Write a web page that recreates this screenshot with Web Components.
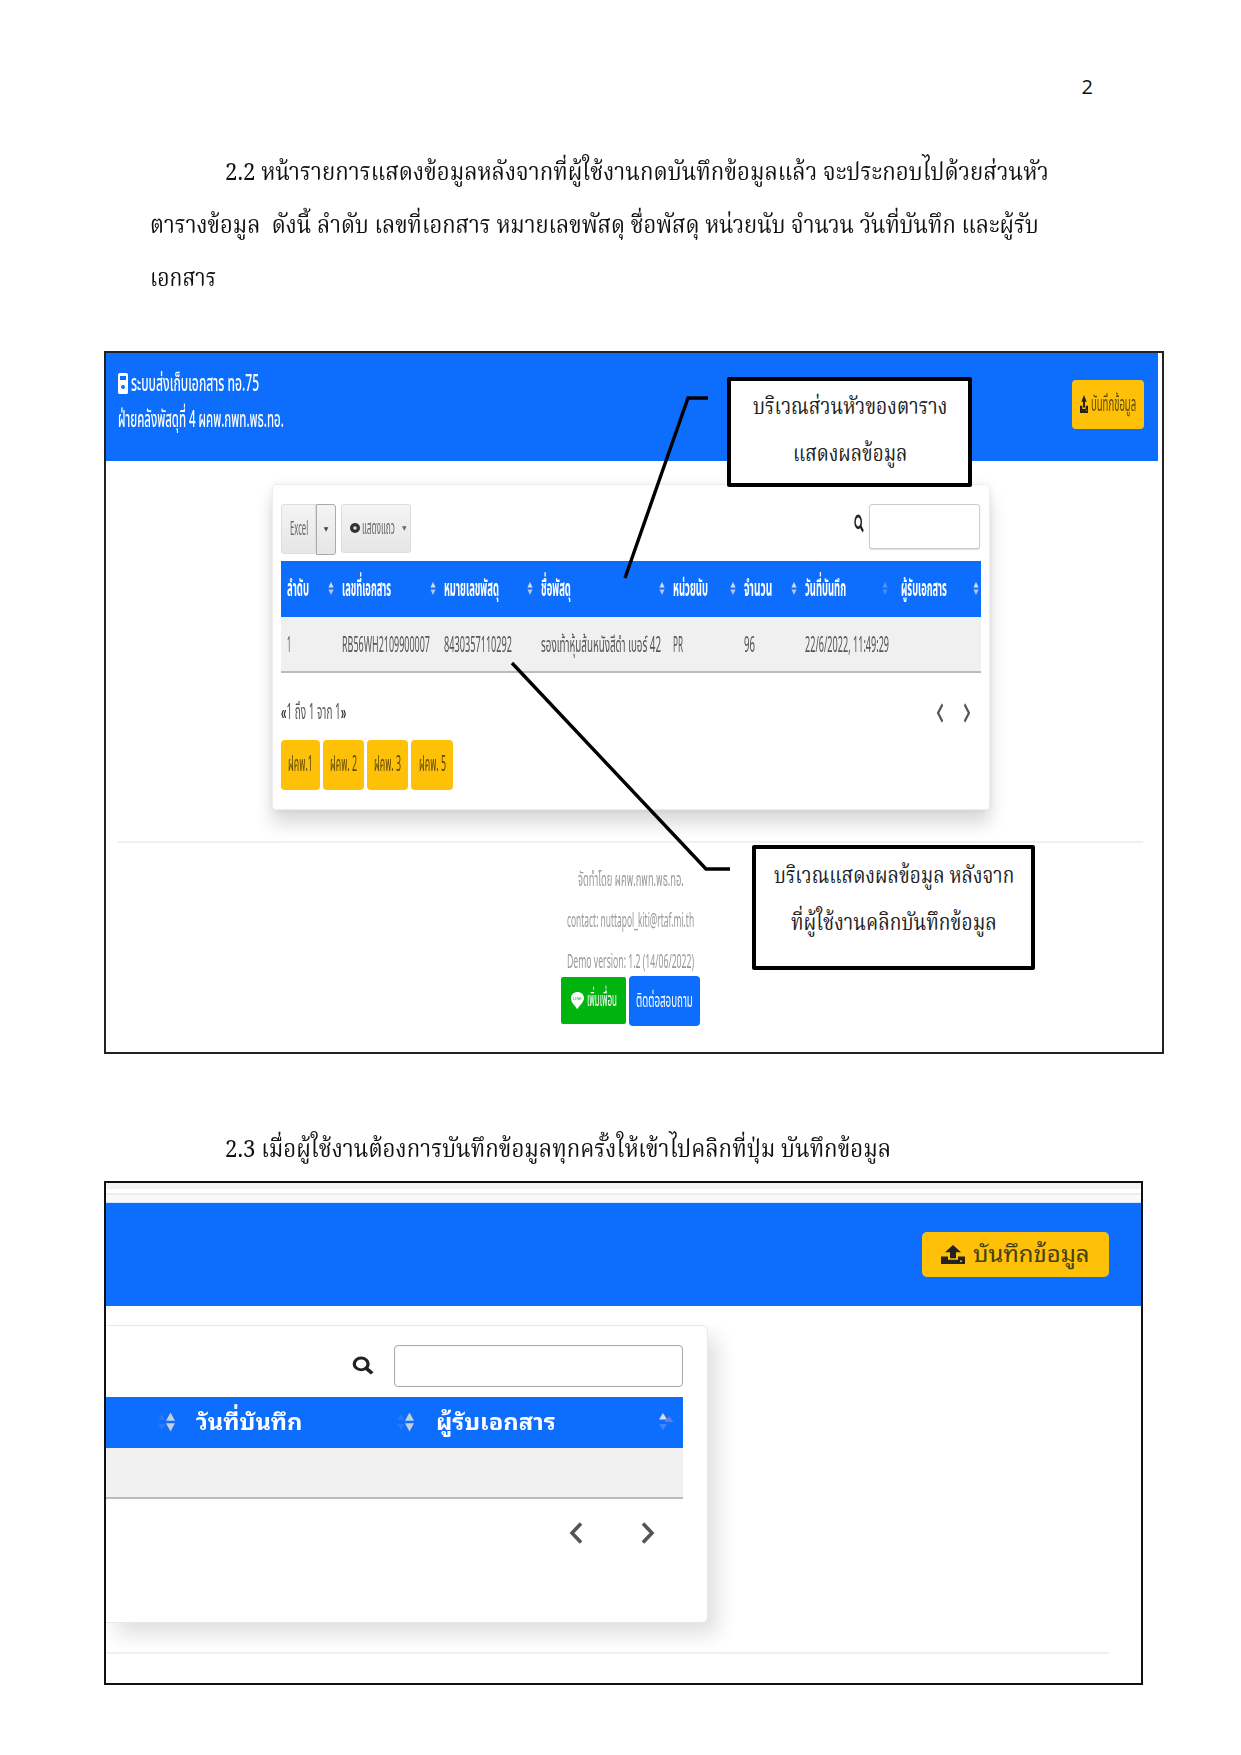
<!DOCTYPE html>
<html lang="th"><head><meta charset="utf-8"><title>คู่มือ</title>
<style>html,body{margin:0;background:#fff}</style></head>
<body>
<doc-page>
  <page-num>2</page-num>
  <doc-para style="margin-top:50px">
    <div style="padding-left:225px"><fit-text w="824">2.2 หน้ารายการแสดงข้อมูลหลังจากที่ผู้ใช้งานกดบันทึกข้อมูลแล้ว จะประกอบไปด้วยส่วนหัว</fit-text></div>
    <div style="padding-left:150px"><fit-text w="889">ตารางข้อมูล &nbsp;ดังนี้ ลำดับ เลขที่เอกสาร หมายเลขพัสดุ ชื่อพัสดุ หน่วยนับ จำนวน วันที่บันทึก และผู้รับ</fit-text></div>
    <div style="padding-left:150px"><fit-text w="66">เอกสาร</fit-text></div>
  </doc-para>
  <shot-list style="margin-top:43px"></shot-list>
  <doc-para style="margin-top:71px">
    <div style="padding-left:225px"><fit-text w="666">2.3 เมื่อผู้ใช้งานต้องการบันทึกข้อมูลทุกครั้งให้เข้าไปคลิกที่ปุ่ม บันทึกข้อมูล</fit-text></div>
  </doc-para>
  <shot-save style="margin-top:3px"></shot-save>

  <leader-lines></leader-lines>
  <note-box style="left:727px;top:377px;width:245px;height:110px;padding-bottom:1px">
    <div><fit-text w="194">บริเวณส่วนหัวของตาราง</fit-text></div>
    <div><fit-text w="114">แสดงผลข้อมูล</fit-text></div>
  </note-box>
  <note-box style="left:752px;top:845px;width:283px;height:125px;padding-bottom:14px">
    <div><fit-text w="240">บริเวณแสดงผลข้อมูล หลังจาก</fit-text></div>
    <div><fit-text w="206">ที่ผู้ใช้งานคลิกบันทึกข้อมูล</fit-text></div>
  </note-box>
</doc-page>
<script>
const mk=(name,css,html)=>customElements.define(name,class extends HTMLElement{
  constructor(){super();this.attachShadow({mode:'open'}).innerHTML=`<style>${css}</style>${html}`}
});
const THAI='"Noto Sans Thai","Loma","Norasi","Garuda","Noto Sans","DejaVu Sans","Liberation Sans",sans-serif';
const LOOP='"Noto Sans Thai Looped","Noto Serif Thai","Norasi","Noto Sans","Liberation Sans",sans-serif';
const SERIF='"Noto Serif Thai","Norasi","Liberation Serif","Noto Sans","DejaVu Serif",serif';

mk('doc-page',`:host{display:block;position:relative;width:1241px;height:1755px;overflow:hidden;background:#fff;color:#000}`,`<slot></slot>`);
mk('page-num',`:host{display:block;padding-top:76px;padding-right:148px;text-align:right;font:20px/22px "Open Sans","Liberation Sans",sans-serif;color:#111}`,`<slot></slot>`);
mk('doc-para',`:host{display:block;font:24px/52.5px ${SERIF};color:#111}`,`<slot></slot>`);
mk('note-box',`:host{position:absolute;box-sizing:border-box;display:flex;flex-direction:column;align-items:center;justify-content:center;background:#fff;border:4px solid #000;border-radius:2px;font:23px/46px ${SERIF};color:#222;text-align:center}`,`<slot></slot>`);
mk('leader-lines',`:host{position:absolute;left:0;top:0;width:1241px;height:1755px;pointer-events:none}svg{display:block}`,
`<svg width="1241" height="1755" fill="none" stroke="#000" stroke-width="3.4"><path d="M708 398H688L625 578"/><path d="M512 663L706 869H730"/></svg>`);

mk('sort-mark',`:host{display:inline-flex;flex:none}svg{display:block}`,
`<svg width="6" height="15" viewBox="0 0 6 15"><path d="M3 1 5.6 6.4H.4z" fill="#d5dcea"/><path d="M3 14 5.6 8.6H.4z" fill="#b9c4da"/></svg>`);
mk('sort-big',`:host{display:inline-flex;flex:none}svg{display:block}`,
`<svg width="18" height="24" viewBox="0 0 18 24"><path d="M4 4 7.500 10H.5zM4 20 7.500 14H.5z" fill="#2a78fb"/><path d="M12.500 2.500 17 10.800H8zM12.500 21.500 17 13.200H8z" fill="#c4cedd"/></svg>`);
mk('sort-top',`:host{display:inline-flex;flex:none}svg{display:block}`,
`<svg width="17" height="24" viewBox="0 0 17 24"><path d="M6 3 10 9.500H2z" fill="#cfdcf3"/><path d="M12 6 16.500 12H7.500z" fill="#6d79d6"/><path d="M6 20 10 14H2z" fill="#3d86fb"/></svg>`);
mk('tray-icon',`:host{display:inline-flex;flex:none}svg{display:block;width:100%;height:100%}`,
`<svg viewBox="0 0 24 20" preserveAspectRatio="none"><path d="M12 0 20 7.500H15V14H9V7.500H4z" fill="#222"/><path d="M0 12H7V15.500H17V12H24V20H0z" fill="#222"/><circle cx="20" cy="17" r="1" fill="#ffc107"/></svg>`);
mk('chev-mark',`:host{display:inline-flex;flex:none}svg{display:block;width:100%;height:100%}`,
`<svg viewBox="0 0 16 22" preserveAspectRatio="none" fill="none" stroke="#555" stroke-width="3.600" stroke-linejoin="miter"><path d="M13 1.500 4 11 13 20.500"/></svg>`);
mk('chev-next',`:host{display:inline-flex;flex:none}svg{display:block;width:100%;height:100%}`,
`<svg viewBox="0 0 16 22" preserveAspectRatio="none" fill="none" stroke="#555" stroke-width="3.600"><path d="M3 1.500 12 11 3 20.500"/></svg>`);
mk('search-mark',`:host{display:inline-flex;flex:none}svg{display:block;width:100%;height:100%}`,
`<svg viewBox="0 0 24 24" preserveAspectRatio="none" fill="none" stroke="#222"><circle cx="10" cy="10" r="7.500" stroke-width="3.600"/><path d="M15.500 15.500 22 22" stroke-width="4.200"/></svg>`);
mk('pill-btn',`:host{display:inline-flex;align-items:center;justify-content:center;box-sizing:border-box;background:#ffc107;border-radius:4px;color:#5c4a08;flex:none}`,`<slot></slot>`);

mk('shot-list',`
:host{display:block;box-sizing:border-box;margin-left:104px;width:1060px;height:703px;border:2px solid #222;background:#fff;overflow:hidden;font-family:${THAI}}
.in{filter:blur(.55px);height:100%;padding-right:4px;box-sizing:border-box}
header{height:108px;background:#0d6efd;color:#fff;padding-left:12px;position:relative;display:flex;box-sizing:border-box;justify-content:space-between;padding-right:14px}
header .l{display:flex;align-items:center;height:36px;gap:3px;font-size:23px;font-weight:500}
.lock{width:10px;height:21px;display:block;flex:none}
pill-btn.save{width:72px;height:49px;gap:3px;font-size:21px}
.ht{padding-top:13px}
.sv{padding-top:27px}
.card{box-sizing:border-box;margin:23px 0 0 166px;width:718px;height:326px;padding:19px 9px 0 8px;background:#fff;border:1px solid #eee;border-radius:4px;box-shadow:0 14px 18px rgba(0,0,0,.15),0 0 8px rgba(0,0,0,.07)}
.tools{display:flex;align-items:flex-start;height:50px}
.b{box-sizing:border-box;display:flex;align-items:center;background:linear-gradient(#f4f4f4,#e6e6e6);border:1px solid #ddd;color:#666;font-size:20px;height:50px}
.ex{width:35px;justify-content:center;border-radius:3px 0 0 3px}
.car{width:20px;justify-content:center;height:51px;font-size:6px;color:#444;border-color:#aaa;border-radius:0 3px 3px 0}
.sh{width:70px;margin-left:5px;gap:2px;padding-left:8px;border-radius:3px;height:49px}
.eye{width:10px;height:10px;flex:none;display:block}
.find{margin-left:auto;display:flex;align-items:center;gap:5px}
search-mark{width:10px;height:19px;margin-top:-5px}
.inp{width:111px;height:45px;box-sizing:border-box;border:1px solid #ccc;border-radius:3px;background:#fff;box-shadow:0 1px 1px #ddd}
.grid{display:grid;grid-template-columns:55px 102px 97px 132px 71px 61px 96px 86px;margin-top:7px;width:700px;font-size:23px}
.th{height:56px;background:#0d6efd;color:#fff;font-weight:700;display:flex;align-items:center;justify-content:space-between;padding:0 2px 0 6px;box-sizing:border-box}
.td{height:56px;background:#f0f0f0;border-bottom:2px solid #bbb;box-sizing:border-box;display:flex;align-items:center;padding:4px 0 0 6px;color:#555;font-size:21px}
.pg{display:flex;align-items:center;justify-content:space-between;height:34px;margin-top:23px;color:#555;font-size:21px}
.pg b{color:#333;font-weight:700;font-family:"Liberation Sans",sans-serif}
.ch{display:flex;gap:19px;padding-right:9px}
.ch>*{width:8px;height:20px}
.btns{display:flex;gap:3px;margin-top:10px}
.btns pill-btn{height:50px;font-size:21px}
.foot{border-top:2px solid #eef0f3;margin:31px 15px 0 12px;padding:17px 0 0 443px;color:#999;font-size:20px}
.col{width:139px;text-align:center}
.col>div{height:41px;line-height:41px}
.col>.bar{display:flex;gap:3px;margin-top:-7px;height:auto;line-height:1}
.g,.bl{display:flex;align-items:center;justify-content:center;color:#fff;border-radius:2px;font-size:20px}
.g{background:#00b30f;width:65px;height:47px;gap:3px;margin-top:1px}
.bl{background:#0d6efd;width:71px;height:50px;border-radius:4px}
.lineic{width:13px;height:19px;display:block;flex:none}
`,`
<div class="in">
<header>
  <div class="ht">
    <div class="l"><svg class="lock" viewBox="0 0 10 21" preserveAspectRatio="none"><path d="M1 0H9L10 1.500V20L9 21H1L0 20V1.500z" fill="#fff"/><rect x="2" y="3" width="6" height="4" fill="#0d6efd"/><circle cx="5" cy="14" r="2" fill="#0d6efd"/></svg><fit-text w="128">ระบบส่งเก็บเอกสาร ทอ.75</fit-text></div>
    <div class="l"><fit-text w="166">ฝ่ายคลังพัสดุที่ 4 ผคพ.กพท.พธ.ทอ.</fit-text></div>
  </div>
  <div class="sv"><pill-btn class="save"><tray-icon style="width:8px;height:18px"></tray-icon><fit-text w="45">บันทึกข้อมูล</fit-text></pill-btn></div>
</header>
<div class="card">
  <div class="tools">
    <div class="b ex"><fit-text w="18">Excel</fit-text></div><div class="b car">▼</div>
    <div class="b sh"><svg class="eye" viewBox="0 0 10 10"><circle cx="5" cy="5" r="5" fill="#333"/><circle cx="5" cy="5" r="1.800" fill="#ddd"/></svg><fit-text w="33">แสดงแถว</fit-text><span style="font-size:6px;margin-left:5px">▼</span></div>
    <div class="find"><search-mark></search-mark><div class="inp"></div></div>
  </div>
  <div class="grid">
    <div class="th"><fit-text w="22">ลำดับ</fit-text><sort-mark></sort-mark></div>
    <div class="th"><fit-text w="49">เลขที่เอกสาร</fit-text><sort-mark></sort-mark></div>
    <div class="th"><fit-text w="55">หมายเลขพัสดุ</fit-text><sort-mark></sort-mark></div>
    <div class="th"><fit-text w="30">ชื่อพัสดุ</fit-text><sort-mark></sort-mark></div>
    <div class="th"><fit-text w="35">หน่วยนับ</fit-text><sort-mark></sort-mark></div>
    <div class="th"><fit-text w="28">จำนวน</fit-text><sort-mark></sort-mark></div>
    <div class="th"><fit-text w="41">วันที่บันทึก</fit-text><sort-mark style="opacity:.35;margin-right:5px"></sort-mark></div>
    <div class="th"><fit-text w="46">ผู้รับเอกสาร</fit-text><sort-mark></sort-mark></div>
    <div class="td"><fit-text w="4">1</fit-text></div>
    <div class="td"><fit-text w="88">RB56WH2109900007</fit-text></div>
    <div class="td"><fit-text w="68">8430357110292</fit-text></div>
    <div class="td"><fit-text w="120">รองเท้าหุ้มส้นหนังสีดำ เบอร์ 42</fit-text></div>
    <div class="td"><fit-text w="10">PR</fit-text></div>
    <div class="td"><fit-text w="11">96</fit-text></div>
    <div class="td"><fit-text w="84">22/6/2022, 11:49:29</fit-text></div>
    <div class="td"></div>
  </div>
  <div class="pg"><fit-text w="65"><b>«</b>1 ถึง 1 จาก 1<b>»</b></fit-text><div class="ch"><chev-mark></chev-mark><chev-next></chev-next></div></div>
  <div class="btns">
    <pill-btn style="width:39px"><fit-text w="25">ฝคพ.1</fit-text></pill-btn>
    <pill-btn style="width:41px"><fit-text w="27">ฝคพ. 2</fit-text></pill-btn>
    <pill-btn style="width:41px"><fit-text w="27">ฝคพ. 3</fit-text></pill-btn>
    <pill-btn style="width:42px"><fit-text w="27">ฝคพ. 5</fit-text></pill-btn>
  </div>
</div>
<div class="foot"><div class="col">
  <div><fit-text w="106">จัดทำโดย ผคพ.กพท.พธ.ทอ.</fit-text></div>
  <div><fit-text w="127">contact: nuttapol_kiti@rtaf.mi.th</fit-text></div>
  <div><fit-text w="127">Demo version: 1.2 (14/06/2022)</fit-text></div>
  <div class="bar">
    <div class="g"><svg class="lineic" viewBox="0 0 13 19" preserveAspectRatio="none"><path d="M6.500 1C10 1 13 3.500 13 7C13 11 8 15 6 18.500C6 16 0 13 0 7C0 3.500 3 1 6.500 1Z" fill="#fff"/><text x="6.500" y="9" font-size="4" text-anchor="middle" fill="#00b30f" font-family="Liberation Sans">LINE</text></svg><fit-text w="30">เพิ่มเพื่อน</fit-text></div>
    <div class="bl"><fit-text w="57">ติดต่อสอบถาม</fit-text></div>
  </div>
</div></div>
</div>`);

mk('shot-save',`
:host{display:block;box-sizing:border-box;margin-left:104px;width:1039px;height:504px;border:2px solid #111;background:#fff;overflow:hidden;font-family:${LOOP}}
.in{filter:blur(.3px)}
.strip{height:20px;box-sizing:border-box;background:linear-gradient(#f3f3f3 0,#f3f3f3 6px,#fff 6px,#fff 10px,#eee 10px,#eee 12px,#f9f9f9 12px,#f9f9f9 19px,#d6e8ff 19px)}
header{height:103px;background:#0d6efd;display:flex;justify-content:flex-end;align-items:flex-start;padding:29px 32px 0 0;box-sizing:border-box}
pill-btn{width:187px;height:45px;gap:8px;font-size:22px;color:#444018;border-radius:5px}
pill-btn fit-text{margin-bottom:4px}
.card{box-sizing:border-box;margin-top:19px;width:602px;height:298px;background:#fff;border:1px solid #e6e8ec;border-left:0;border-radius:0 6px 6px 0;padding:19px 24px 0 0;box-shadow:10px 12px 20px rgba(0,0,0,.12)}
.find{display:flex;justify-content:flex-end;align-items:center;gap:20px}
search-mark{width:22px;height:19px}
.inp{width:289px;height:42px;box-sizing:border-box;border:1px solid #aaa;border-radius:4px;box-shadow:inset 0 0 1px #ccc}
.head{margin-top:10px;height:51px;background:#0d6efd;display:grid;grid-template-columns:70px 240px 267px;color:#fff;font-weight:700;font-size:23px}
.head>div{display:flex;align-items:center;justify-content:space-between;padding-left:20px;box-sizing:border-box}
.head fit-text{margin-bottom:6px}
.row{height:51px;background:#f1f1f1;border-bottom:2px solid #bbb;box-sizing:border-box}
.ch{display:flex;justify-content:flex-end;gap:56px;padding:23px 27px 0 0}
.ch>*{width:16px;height:22px}
.rule{margin-top:29px;width:1003px;height:2px;background:#eef0f3}
`,`
<div class="in">
<div class="strip"></div>
<header><pill-btn><tray-icon style="width:24px;height:19px"></tray-icon><fit-text w="117">บันทึกข้อมูล</fit-text></pill-btn></header>
<div class="card">
  <div class="find"><search-mark></search-mark><div class="inp"></div></div>
  <div class="head">
    <div><span></span><sort-big></sort-big></div>
    <div style="padding-right:1px"><fit-text w="106">วันที่บันทึก</fit-text><sort-big></sort-big></div>
    <div style="padding-right:9px"><fit-text w="120">ผู้รับเอกสาร</fit-text><sort-top></sort-top></div>
  </div>
  <div class="row"></div>
  <div class="ch"><chev-mark></chev-mark><chev-next></chev-next></div>
</div>
<div class="rule"></div>
</div>`);

customElements.define('fit-text',class extends HTMLElement{
  constructor(){super();this.attachShadow({mode:'open'}).innerHTML=`<style>:host{display:inline-block;white-space:nowrap;text-align:left;vertical-align:middle}span{display:inline-block;transform-origin:left center}</style><span><slot></slot></span>`}
  connectedCallback(){
    const w=+this.getAttribute('w'),s=this.shadowRoot.querySelector('span'),n=s.offsetWidth||1;
    this.style.width=w+'px';
    s.style.transform=`scaleX(${(w/n).toFixed(4)})`;
  }
});
</script>
</body></html>
